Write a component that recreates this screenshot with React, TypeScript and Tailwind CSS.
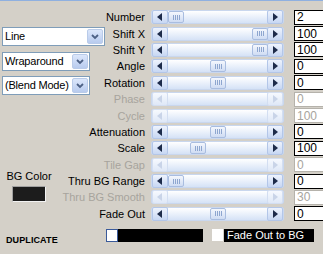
import React from "react";

type Row = { label: string; value: string; thumb: number | null; disabled?: boolean };

const rows: Row[] = [
  { label: "Number", value: "2", thumb: 17 },
  { label: "Shift X", value: "100", thumb: 101 },
  { label: "Shift Y", value: "100", thumb: 101 },
  { label: "Angle", value: "0", thumb: 59 },
  { label: "Rotation", value: "0", thumb: 59 },
  { label: "Phase", value: "0", thumb: null, disabled: true },
  { label: "Cycle", value: "100", thumb: null, disabled: true },
  { label: "Attenuation", value: "0", thumb: 59 },
  { label: "Scale", value: "100", thumb: 39 },
  { label: "Tile Gap", value: "0", thumb: null, disabled: true },
  { label: "Thru BG Range", value: "0", thumb: 17 },
  { label: "Thru BG Smooth", value: "30", thumb: null, disabled: true },
  { label: "Fade Out", value: "0", thumb: 59 },
];

function ArrowBtn({ dir, disabled }: { dir: "l" | "r"; disabled?: boolean }) {
  return (
    <div
      className={`w-[16px] h-[14px] shrink-0 flex items-center justify-center border rounded-[2px] bg-gradient-to-b ${
        disabled ? "border-[#d3def1] from-[#f6f9fe] to-[#dfe8f7]" : "border-[#b3c6e8] from-[#eef3fd] to-[#c7d7f3]"
      }`}
    >
      <svg width="6" height="8" viewBox="0 0 6 8">
        {dir === "l" ? (
          <path d="M5 0 L5 8 L0 4 Z" fill={disabled ? "#c9d4e8" : "#1d2b4a"} />
        ) : (
          <path d="M1 0 L1 8 L6 4 Z" fill={disabled ? "#c9d4e8" : "#1d2b4a"} />
        )}
      </svg>
    </div>
  );
}

function Slider({ thumb, disabled }: { thumb: number | null; disabled?: boolean }) {
  return (
    <div className="relative w-[133px] h-[14px] flex items-center border border-[#c9d7ee] rounded-[2px] bg-gradient-to-b from-[#ffffff] to-[#d5e2f6]">
      <ArrowBtn dir="l" disabled={disabled} />
      <div className="flex-1" />
      <ArrowBtn dir="r" disabled={disabled} />
      {thumb !== null && (
        <div
          className="absolute top-[0px] w-[16px] h-[12px] border border-[#a9bde0] rounded-[2px] bg-gradient-to-b from-[#f4f7fd] to-[#cfdcf3] flex items-center justify-center gap-[1px]"
          style={{ left: thumb - 1 }}
        >
          <div className="w-[1px] h-[5px] bg-[#8ea6cf]" />
          <div className="w-[1px] h-[5px] bg-[#8ea6cf]" />
          <div className="w-[1px] h-[5px] bg-[#8ea6cf]" />
          <div className="w-[1px] h-[5px] bg-[#8ea6cf]" />
        </div>
      )}
    </div>
  );
}

function Combo({ text, w }: { text: string; w: number }) {
  return (
    <div className="flex h-[19px] items-stretch border border-[#7f9db9] bg-white" style={{ width: w }}>
      <div className="flex-1 min-w-0 flex items-center pl-[2px] text-[11px] tracking-[-0.2px] text-black whitespace-nowrap">{text}</div>
      <div className="w-[16px] shrink-0 m-[1px] flex items-center justify-center rounded-[2px] border border-[#b9cbe9] bg-gradient-to-b from-[#dce7fb] to-[#b8cbee]">
        <svg width="8" height="6" viewBox="0 0 8 6">
          <path d="M1 1 L4 4 L7 1" stroke="#4d6185" strokeWidth="1.8" fill="none" />
        </svg>
      </div>
    </div>
  );
}

export default function App() {
  return (
    <div
      className="w-[323px] h-[254px] bg-[#d4d0c8] overflow-hidden border-t border-[#8fb0e0] flex flex-col"
      style={{ fontFamily: '"Liberation Sans", Arial, sans-serif' }}
    >
      <div className="flex">
        <div className="w-[106px] shrink-0 flex flex-col pl-[2px]">
          <div className="h-[26px]" />
          <Combo text="Line" w={103} />
          <div className="h-[6px]" />
          <Combo text="Wraparound" w={88} />
          <div className="h-[5px]" />
          <Combo text="(Blend Mode)" w={88} />
          <div className="h-[75px]" />
          <div className="w-[48px] flex flex-col items-center ml-[3px]">
            <div className="text-[11px] leading-[12px] text-black whitespace-nowrap">BG Color</div>
            <div className="mt-[4px] w-[34px] h-[16px] bg-[#1c1c1c] border border-[#f2f2f2] border-t-[#a0a0a0] border-l-[#a0a0a0]" />
          </div>
        </div>
        <div className="flex flex-col pt-[8px]">
          {rows.map((r) => (
            <div key={r.label} className="flex items-center h-[16.4px]">
              <div className="w-[39px] flex justify-end whitespace-nowrap">
                <span className={`text-[11px] leading-[12px] ${r.disabled ? "text-[#a7a49d]" : "text-black"}`}>{r.label}</span>
              </div>
              <div className="w-[6px]" />
              <Slider thumb={r.thumb} disabled={r.disabled} />
              <div className="w-[10px]" />
              <div
                className={`w-[32px] h-[15px] bg-white border flex items-center pl-[2px] text-[12px] ${
                  r.disabled ? "border-[#b5b2ab] text-[#a7a49d]" : "border-black text-black"
                }`}
              >
                {r.value}
              </div>
            </div>
          ))}
        </div>
      </div>
      <div className="flex items-start mt-[7px] leading-none">
        <div className="w-[106px] shrink-0 pl-[6px] pt-[6px]">
          <div className="text-[9px] leading-[10px] font-bold text-black tracking-[0.1px]">DUPLICATE</div>
        </div>
        <div className="w-[97px] h-[13px] bg-black flex">
          <div className="w-[12px] h-[13px] bg-white border border-[#3a5a9a]" />
        </div>
        <div className="w-[9px]" />
        <div className="w-[11px] h-[12px] bg-white" />
        <div className="w-[1px]" />
        <div className="h-[13px] bg-black text-white text-[11px] leading-[13px] px-[3px] pr-[10px] whitespace-nowrap">Fade Out to BG</div>
      </div>
    </div>
  );
}
